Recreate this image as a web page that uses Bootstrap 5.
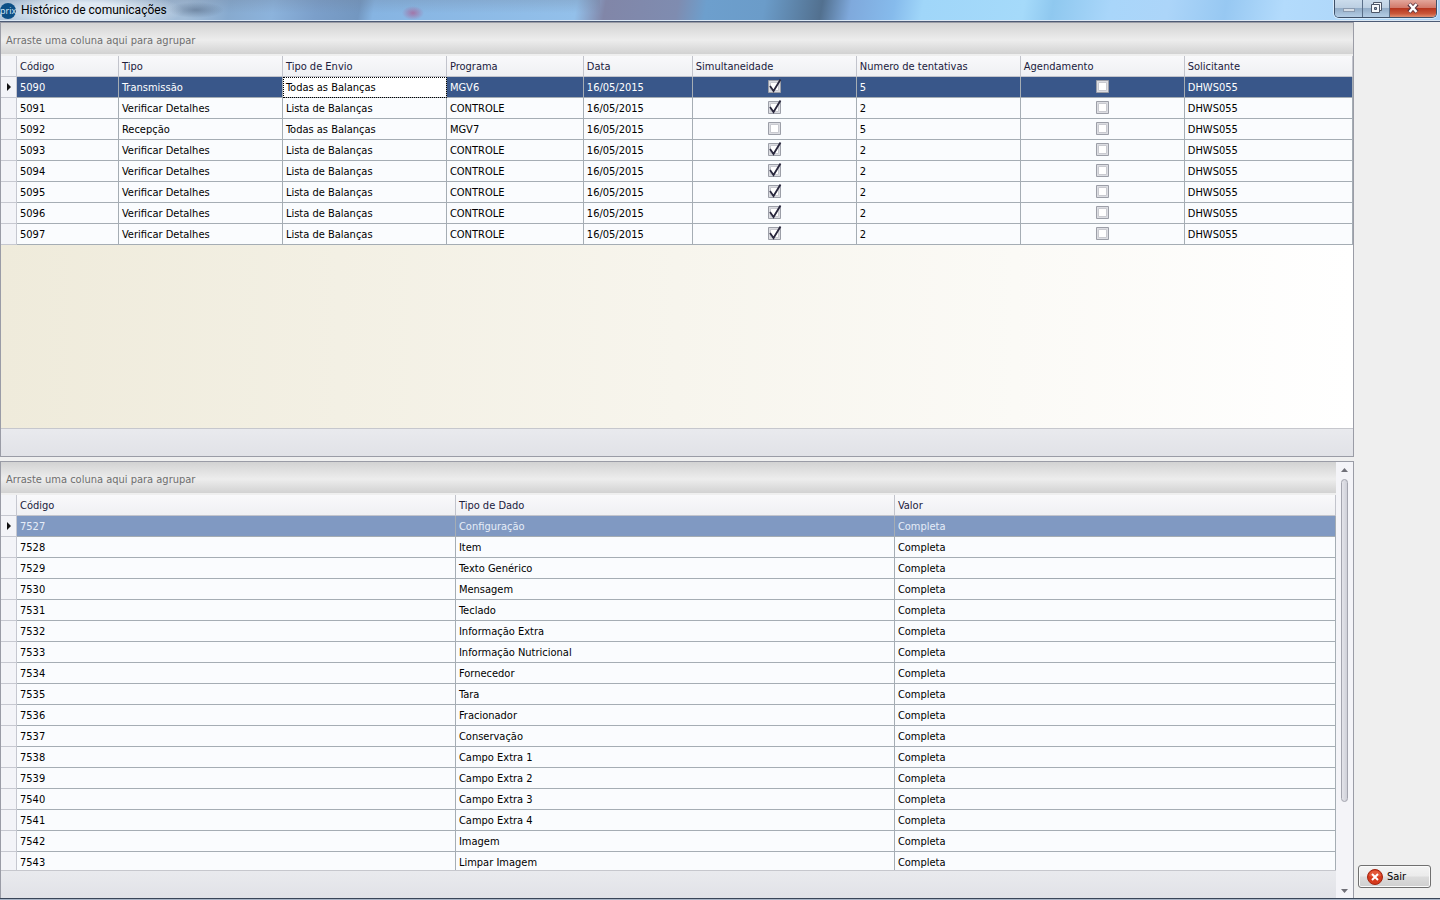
<!DOCTYPE html>
<html lang="pt-BR">
<head>
<meta charset="utf-8">
<meta name="viewport" content="width=device-width, initial-scale=1">
<title>Histórico de comunicações</title>
<link href="https://cdn.jsdelivr.net/npm/bootstrap@5.3.0/dist/css/bootstrap.min.css" rel="stylesheet">
<style>
body{font:11px/20px "DejaVu Sans Condensed","DejaVu Sans",sans-serif;background:#efefef;color:#000}
.titlebar{height:22px;border-bottom:1px solid #4d5b75;box-shadow:inset 0 -1px #dbe7f3;
 background:
 radial-gradient(ellipse 100px 20px at 84px 11px,#dfe9f3 40%,#dfe9f300 100%),
 radial-gradient(ellipse 28px 8px at 196px 10px,#5d738faa 0,#5d738f00 100%),
 radial-gradient(ellipse 11px 7px at 413px 13px,#a8669acc 0,#a8669a00 100%),
 linear-gradient(180deg,#6f7f9844 0,#6f7f9800 60%) 0 0/600px 22px no-repeat,
 linear-gradient(100deg,#a8bfd6 0,#a3bdd8 13%,#87aacf 16%,#8cb3dc 19%,#7b9fca 22%,#7397c0 25%,#86b4e2 26%,#93c0ea 40%,#8186a8 42%,#7f8cb0 47%,#6d9fcd 49%,#6b9cc9 53%,#52708f 57%,#7fa9dc 59%,#86bbec 62%,#a0d6f9 64%,#a5dafa 71%,#8fc8ef 73%,#a9d6fa 77%,#acd5f9 81%,#97c8f2 85%,#b3dbfc 89%,#a9d2f6 100%)}
.titlebar h1{font:12px/20px Roboto,"Open Sans",sans-serif;color:#000}
.winbtns{height:18px;border:1px solid #3e5068;border-top:0;border-radius:0 0 5px 5px;overflow:hidden;box-shadow:0 0 0 1px #ffffff80;margin-right:3px}
.winbtns button{border:0;padding:0;height:17px;width:28px;border-right:1px solid #5a6f89;background:linear-gradient(#cbdcec 0,#bccfe2 45%,#93adc8 50%,#b4cde5 100%)}
.winbtns button:nth-child(2){width:27px}
.winbtns .closebtn{width:46px;border-right:0;background:linear-gradient(#e3a69b 0,#d27a6b 45%,#b73720 50%,#c9573a 80%,#e08f72 100%)}
.side{width:86px;padding:0 9px 10px 4px}
.gridpanel{border:1px solid #9a9ca6;min-height:0}
.commsgrid{flex:433 1 0}
.detailgrid{flex:436 1 0}
.shrinkable{min-width:0;min-height:0}
.groupbar{height:31px;line-height:36px;padding-left:5px;color:#6e6e6e;background:linear-gradient(#d3d3d3,#ededed 55%,#d2d2d2);margin-bottom:2px}
.gridbody{min-height:0;overflow:hidden;background:linear-gradient(90deg,#efebdb,#fff)}
.gridpanel .foot{height:28px;border-top:1px solid #c6c7cd;background:linear-gradient(#e9eaee,#e1e2e7)}
.datagrid{table-layout:fixed;width:100%;border-collapse:separate;border-spacing:0}
.datagrid th,.datagrid td{height:21px;padding:2px 0 0 3px;border-right:1px solid #a5adb4;border-bottom:1px solid #a5adb4;white-space:nowrap;overflow:hidden;font-weight:400;line-height:18px}
.datagrid td{background:#fafcfe}
.datagrid th{background:linear-gradient(#f9f9fb,#eff0f3);color:#20203c;border-color:#c2c4cc}
.datagrid .ind{width:16px;padding:0;background:#f3f4f8;border-color:#c6c8d0}
.datagrid .chk{padding:0 0 2px 2px}
.datagrid .ind svg{display:block;margin:0 auto}
.sel td:not(.ind){background:#39578a;color:#fff}
.dim td:not(.ind){background:#8099c2;color:#e6edf8}
.datagrid .cellfocus:not(.ind){background:#fff;color:#000;outline:1px dotted #000;outline-offset:-1px}
.w-cod{width:7.54%}.w-std{width:12.13%}.w-prog{width:10.13%}.w-data{width:8.06%}.w-third{width:32.88%}
.datagrid input{appearance:none;display:block;width:15px;height:16px;margin:0 auto;background:url("data:image/svg+xml,%3Csvg xmlns='http://www.w3.org/2000/svg' width='15' height='16'%3E%3Cpath d='M.5 2.5h12v12H.5z' fill='%23dcdde2' stroke='%239c9fa8'/%3E%3Cpath d='M2.5 4.5h8v8h-8z' fill='%23fff' stroke='%23c9cad0'/%3E%3C/svg%3E") no-repeat}
.datagrid input:checked{background-image:url("data:image/svg+xml,%3Csvg xmlns='http://www.w3.org/2000/svg' width='15' height='16'%3E%3Cpath d='M.5 2.5h12v12H.5z' fill='%23dcdde2' stroke='%239c9fa8'/%3E%3Cpath d='M2.5 4.5h8v8h-8z' fill='%23fff' stroke='%23c9cad0'/%3E%3Cpath d='M2 8l3.5 5L12.5 1.500' fill='none' stroke='%2328263c' stroke-width='1.800'/%3E%3C/svg%3E")}
.vscroll{width:17px;background:#f4f4f8;padding:5px 0 4px}
.thumbtrack{padding:6px 0 10px}
.thumb{width:7px;height:81%;border:1px solid #a3a4ae;border-radius:4px;background:linear-gradient(90deg,#e4e4ea,#cfd0d8)}
.exitbtn{height:23px;font-size:11px;line-height:20px;border:1px solid #707070;border-radius:3px;padding:0 0 0 8px;background:linear-gradient(#f4f4f4,#ebebeb 48%,#dcdcdc 52%,#cfcfcf);box-shadow:inset 0 0 0 1px #fafafa}
.taskedge{height:2px;background:linear-gradient(#3a4658 50%,#a8b4c6 50%)}
</style>
</head>
<body>
<div class="d-flex flex-column vh-100 overflow-hidden">
<header class="titlebar d-flex align-items-start flex-shrink-0">
 <svg width="17" height="20" viewBox="0 0 17 20" class="flex-shrink-0"><circle cx="8" cy="11" r="8" fill="#0c4f86"/><text x="0" y="14" font-family="Open Sans" font-size="9" fill="#d8ecfa">prix</text></svg>
 <h1 class="m-0 ps-1 flex-grow-1">Histórico de comunicações</h1>
 <div class="winbtns d-flex">
  <button type="button" aria-label="Minimizar"><svg class="d-block mx-auto" width="14" height="17"><rect x="1.500" y="8.500" width="11" height="3" fill="#d5dde6" stroke="#8b9bb0"/></svg></button>
  <button type="button" aria-label="Restaurar"><svg class="d-block mx-auto" width="13" height="17"><path d="M3.500 2.500h8v8h-8z" fill="#f5f8fb" stroke="#4c5669"/><path d="M1.500 4.500h8v8h-8z" fill="#f5f8fb" stroke="#4c5669"/><path d="M4.500 7.500h2v2h-2z" fill="#8fa5c0" stroke="#4c5669"/></svg></button>
  <button type="button" class="closebtn" aria-label="Fechar"><svg class="d-block mx-auto" width="14" height="17"><path d="M3 4l8 8M11 4l-8 8" stroke="#5b3440" stroke-width="4.500"/><path d="M3.500 4l7 8M10.500 4l-7 8" stroke="#fff" stroke-width="2.500"/></svg></button>
 </div>
</header>
<main class="d-flex flex-grow-1 shrinkable">
 <div class="d-flex flex-column flex-grow-1 gap-1 shrinkable">
  <section class="gridpanel commsgrid d-flex flex-column">
   <div class="groupbar flex-shrink-0">Arraste uma coluna aqui para agrupar</div>
   <div class="gridbody flex-grow-1">
    <table class="datagrid"><thead><tr><th class="ind"></th><th class="w-cod">Código</th><th class="w-std">Tipo</th><th class="w-std">Tipo de Envio</th><th class="w-prog">Programa</th><th class="w-data">Data</th><th class="w-std">Simultaneidade</th><th class="w-std">Numero de tentativas</th><th class="w-std">Agendamento</th><th>Solicitante</th></tr></thead><tbody id="comms"></tbody></table>
   </div>
   <div class="foot flex-shrink-0"></div>
  </section>
  <section class="gridpanel detailgrid d-flex border-bottom-0">
   <div class="d-flex flex-column flex-grow-1 shrinkable">
    <div class="groupbar flex-shrink-0">Arraste uma coluna aqui para agrupar</div>
    <div class="gridbody flex-grow-1">
     <table class="datagrid"><thead><tr><th class="ind"></th><th class="w-third">Código</th><th class="w-third">Tipo de Dado</th><th>Valor</th></tr></thead><tbody id="details"></tbody></table>
    </div>
    <div class="foot flex-shrink-0"></div>
   </div>
   <div class="vscroll d-flex flex-column align-items-center flex-shrink-0">
    <svg width="7" height="6" class="flex-shrink-0"><path d="M0 5l3.500-4L7 5z" fill="#707078"/></svg>
    <div class="thumbtrack flex-grow-1"><div class="thumb"></div></div>
    <svg width="7" height="6" class="flex-shrink-0"><path d="M0 1l3.500 4L7 1z" fill="#707078"/></svg>
   </div>
  </section>
 </div>
 <aside class="side d-flex flex-column justify-content-end flex-shrink-0">
  <button type="button" class="exitbtn d-flex align-items-center gap-1"><svg width="16" height="16" viewBox="0 0 16 16"><circle cx="8" cy="8" r="7.500" fill="#d63a1c" stroke="#a32612"/><path d="M2 7a6 5.500 0 0 1 12 0q-6 2-12 0z" fill="#ef7a58" opacity=".5"/><path d="M5 5l6 6M11 5l-6 6" stroke="#fff" stroke-width="2"/></svg>Sair</button>
 </aside>
</main>
<div class="taskedge flex-shrink-0"></div>
</div>
<script>
const arrow='<svg width="4" height="8"><path d="M0 0l4 4-4 4z" fill="#111"/></svg>';
const box=(on,label)=>`<td class="chk"><input type="checkbox" aria-label="${label}"${on?' checked':''}></td>`;
const rows=[['Transmissão','Todas as Balanças','MGV6',1,5],['Verificar Detalhes','Lista de Balanças','CONTROLE',1,2],['Recepção','Todas as Balanças','MGV7',0,5]];
for(let i=0;i<5;i++)rows.push(rows[1]);
document.getElementById('comms').innerHTML=rows.map((r,i)=>`<tr class="${i?'':'sel'}"><td class="ind">${i?'':arrow}</td><td>${5090+i}</td><td>${r[0]}</td><td class="${i?'':'cellfocus'}">${r[1]}</td><td>${r[2]}</td><td>16/05/2015</td>${box(r[3],'Simultaneidade')}<td>${r[4]}</td>${box(0,'Agendamento')}<td>DHWS055</td></tr>`).join('');
const types=['Configuração','Item','Texto Genérico','Mensagem','Teclado','Informação Extra','Informação Nutricional','Fornecedor','Tara','Fracionador','Conservação','Campo Extra 1','Campo Extra 2','Campo Extra 3','Campo Extra 4','Imagem','Limpar Imagem'];
document.getElementById('details').innerHTML=types.map((t,i)=>`<tr class="${i?'':'dim'}"><td class="ind">${i?'':arrow}</td><td>${7527+i}</td><td>${t}</td><td>Completa</td></tr>`).join('');
</script>
<script src="https://cdn.jsdelivr.net/npm/bootstrap@5.3.0/dist/js/bootstrap.bundle.min.js"></script>
</body>
</html>
